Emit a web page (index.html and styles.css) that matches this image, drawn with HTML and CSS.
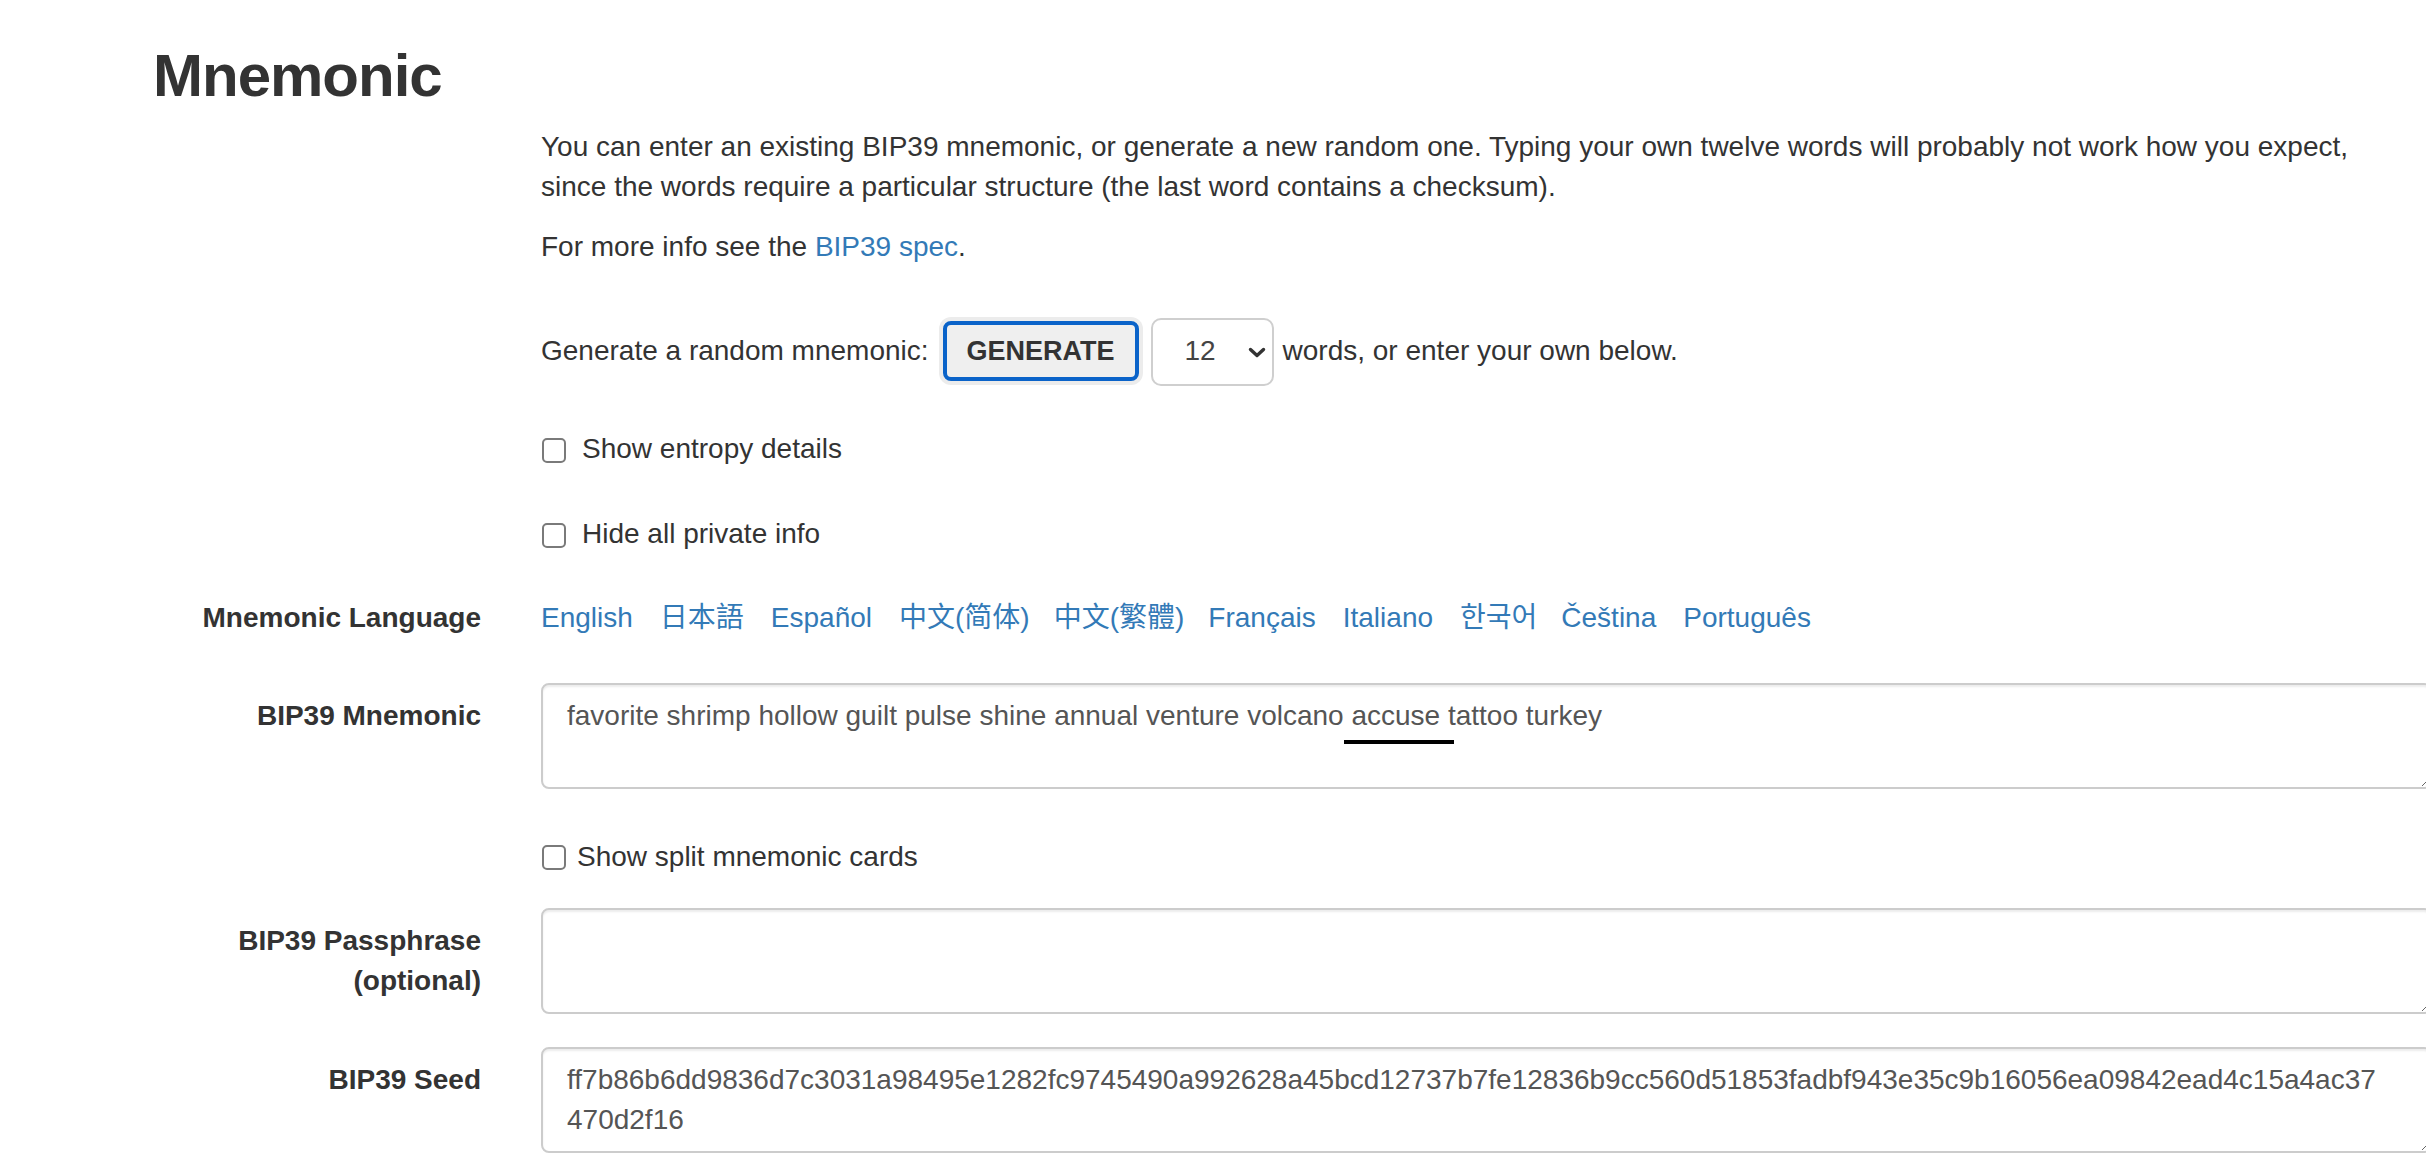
FILE: index.html
```html
<!DOCTYPE html>
<html lang="en">
<head>
<meta charset="utf-8">
<title>Mnemonic</title>
<link rel="stylesheet" href="styles.css">
</head>
<body>
<div class="page">
  <h2 class="title">Mnemonic</h2>

  <div class="form-row intro">
    <div class="col-control">
      <p class="intro-text">You can enter an existing BIP39 mnemonic, or generate a new random one. Typing your own twelve words will probably not work how you expect, since the words require a particular structure (the last word contains a checksum).</p>
      <p class="intro-more">For more info see the <a href="#" class="link">BIP39 spec</a>.</p>

      <div class="generate-row">
        <span class="gen-label">Generate a random mnemonic:</span>
        <button class="btn-generate" type="button">GENERATE</button>
        <span class="select-wrap">
          <select class="strength"><option>12</option></select>
          <svg class="chev" width="18" height="11" viewBox="0 0 18 11"><polyline points="2.5,2.5 9,8.5 15.5,2.5" fill="none" stroke="#333" stroke-width="3.4" stroke-linecap="round" stroke-linejoin="round"/></svg>
        </span>
        <span class="gen-after">words, or enter your own below.</span>
      </div>

      <label class="check check-entropy"><input type="checkbox" class="cb"><span class="check-text">Show entropy details</span></label>
      <label class="check check-private"><input type="checkbox" class="cb"><span class="check-text">Hide all private info</span></label>
    </div>
  </div>

  <div class="form-row row-lang">
    <div class="row-label">Mnemonic Language</div>
    <div class="langs">
      <a href="#" class="link">English</a>
      <a href="#" class="link">日本語</a>
      <a href="#" class="link">Español</a>
      <a href="#" class="link">中文(简体)</a>
      <a href="#" class="link lang-tight">中文(繁體)</a>
      <a href="#" class="link lang-tight">Français</a>
      <a href="#" class="link">Italiano</a>
      <a href="#" class="link">한국어</a>
      <a href="#" class="link lang-tight">Čeština</a>
      <a href="#" class="link">Português</a>
    </div>
  </div>

  <div class="form-row row-mnemonic">
    <label class="row-label field-label" for="phrase">BIP39 Mnemonic</label>
    <div class="field">
      <textarea id="phrase" class="box">favorite shrimp hollow guilt pulse shine annual venture volcano accuse tattoo turkey</textarea>
      <span class="spell-mark"></span>
    </div>
  </div>

  <div class="form-row row-split">
    <div class="col-control">
      <label class="check check-split"><input type="checkbox" class="cb cb-split"><span class="check-text">Show split mnemonic cards</span></label>
    </div>
  </div>

  <div class="form-row row-pass">
    <label class="row-label field-label" for="passphrase">BIP39 Passphrase (optional)</label>
    <div class="field">
      <textarea id="passphrase" class="box"></textarea>
    </div>
  </div>

  <div class="form-row row-seed">
    <label class="row-label field-label" for="seed">BIP39 Seed</label>
    <div class="field">
      <textarea id="seed" class="box box-seed">ff7b86b6dd9836d7c3031a98495e1282fc9745490a992628a45bcd12737b7fe12836b9cc560d51853fadbf943e35c9b16056ea09842ead4c15a4ac37470d2f16</textarea>
    </div>
  </div>
</div>
</body>
</html>
```

FILE: styles.css
```css
html, body {
  margin: 0;
  padding: 0;
  overflow: hidden;
  background: #fff;
}

body {
  font-family: "Liberation Sans", Arial, "Noto Sans CJK SC", "Noto Sans CJK KR", sans-serif;
  font-size: 28px;
  line-height: 40px;
  color: #333;
}

.page {
  width: 2432px;
  box-sizing: border-box;
  padding-left: 153px;
}

.title {
  margin: 43px 0 0;
  font-size: 60px;
  line-height: 66px;
  font-weight: 700;
  letter-spacing: -1px;
  color: #333;
}

.form-row {
  display: grid;
  grid-template-columns: 328px 1fr;
  column-gap: 60px;
}

.col-control {
  grid-column: 2;
}

.intro {
  margin-top: 18px;
}

.intro-text {
  margin: 0;
  max-width: 1830px;
}

.intro-more {
  margin: 20px 0 0;
}

.link {
  color: #337ab7;
  text-decoration: none;
}

.generate-row {
  display: flex;
  align-items: baseline;
  margin-top: 51px;
}

.btn-generate {
  box-sizing: border-box;
  width: 196px;
  height: 60px;
  margin-left: 14px;
  padding: 10px 0;
  border: 4px solid #0a63c9;
  border-radius: 8px;
  background: #efefef;
  box-shadow: 0 0 0 4px #ececec;
  font-family: "Liberation Sans", Arial, sans-serif;
  font-size: 27px;
  line-height: 32px;
  font-weight: 700;
  color: #333;
  text-align: center;
}

.select-wrap {
  position: relative;
  display: inline-block;
  margin-left: 12px;
}

.strength {
  -webkit-appearance: none;
  appearance: none;
  box-sizing: border-box;
  width: 123px;
  height: 68px;
  padding: 11px 0 13px 32px;
  border: 2px solid #cfcfcf;
  border-radius: 10px;
  background: #fff;
  font-family: "Liberation Sans", Arial, sans-serif;
  font-size: 28px;
  line-height: 40px;
  color: #444;
}

.chev {
  position: absolute;
  left: 97px;
  top: 29px;
}

.gen-after {
  margin-left: 9px;
}

.check {
  display: flex;
  align-items: flex-start;
}

.check-entropy {
  margin-top: 43px;
}

.check-private {
  margin-top: 45px;
}

.cb {
  -webkit-appearance: none;
  appearance: none;
  box-sizing: border-box;
  width: 24px;
  height: 25px;
  margin: 9px 16px 0 1px;
  border: 2px solid #7a7a7a;
  border-radius: 5px;
  background: #fff;
}

.cb-split {
  margin: 8px 11px 0 1px;
}

.row-lang {
  margin-top: 44px;
}

.row-label {
  text-align: right;
  font-weight: 700;
}

.field-label {
  padding-top: 13px;
}

.langs {
  display: flex;
  column-gap: 27px;
}

.lang-tight {
  margin-left: -3px;
}

.row-mnemonic {
  margin-top: 45px;
}

.row-split {
  margin-top: 48px;
}

.row-pass {
  margin-top: 31px;
}

.row-seed {
  margin-top: 33px;
}

.field {
  position: relative;
}

.box {
  display: block;
  box-sizing: border-box;
  width: 100%;
  height: 106px;
  margin: 0;
  padding: 11px 24px 12px;
  border: 2px solid #ccc;
  border-radius: 8px;
  box-shadow: inset 0 2px 2px rgba(0, 0, 0, 0.075);
  font-family: "Liberation Sans", Arial, sans-serif;
  font-size: 28px;
  line-height: 40px;
  color: #555;
  background: #fff;
  overflow: hidden;
}

.box-seed {
  padding-right: 47px;
  word-break: break-all;
}

.spell-mark {
  position: absolute;
  left: 803px;
  top: 57px;
  width: 110px;
  height: 4px;
  background: #000;
}
```
